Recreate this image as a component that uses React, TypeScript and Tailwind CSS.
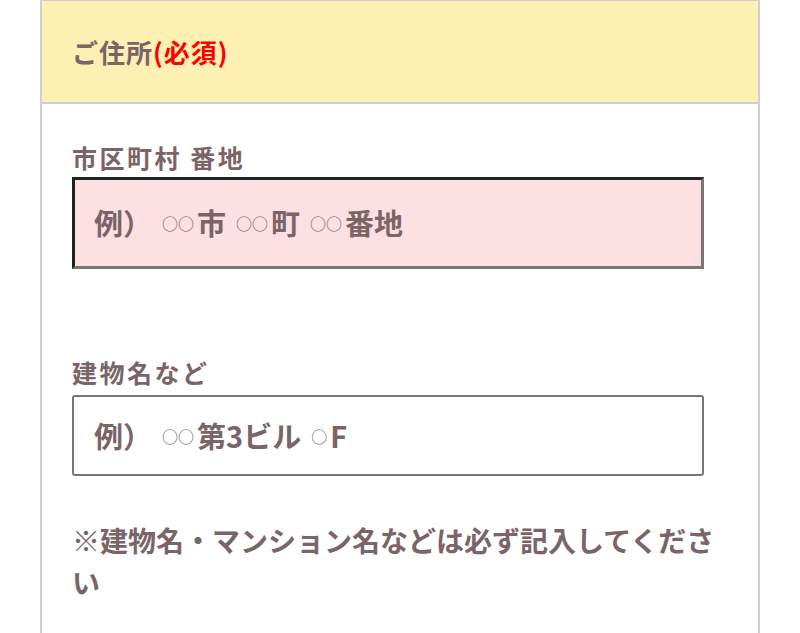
import type { ReactNode } from 'react';

const font = { fontFamily: '"Noto Sans CJK JP", "Noto Sans", sans-serif' };

const Maru = ({ n = 2 }: { n?: number }) => (
  <span className="ml-[10px] mr-[3px] text-[16px] font-normal text-[#6f5a5d]">{'○'.repeat(n)}</span>
);

function Field({
  label,
  children,
  variant,
  className,
}: {
  label: string;
  children: ReactNode;
  variant: 'inset' | 'plain';
  className?: string;
}) {
  return (
    <div className={`flex flex-col ${className ?? ''}`}>
      <div className="text-[25px] font-bold leading-[30px] tracking-[2.5px] text-[#7b6467]">{label}</div>
      {variant === 'inset' ? (
        <div className="mt-[5px] flex h-[92px] w-[632px] items-center border-[3px] border-t-[#222] border-l-[#222] border-b-[#777] border-r-[#777] bg-[#fde0e1] pl-[19px] text-[29px] font-bold whitespace-nowrap text-[#7b6467]">
          {children}
        </div>
      ) : (
        <div className="mt-[8px] flex h-[81px] w-[632px] items-center rounded-[3px] border-2 border-[#767676] bg-white pl-[20px] text-[29px] font-bold whitespace-nowrap text-[#7b6467]">
          {children}
        </div>
      )}
    </div>
  );
}

export default function App() {
  return (
    <div className="h-[633px] w-[800px] overflow-hidden bg-white" style={font}>
      <div className="ml-[40px] h-full w-[720px] border-x-2 border-t border-[#cfcfcf]">
        <div className="flex h-[103px] items-center border-b-2 border-[#cfcfcf] bg-[#feefb2] pl-[30px] text-[26px] font-bold tracking-[1px] text-[#7b6467]">
          ご住所<span className="text-[#ff0000]">(必須)</span>
        </div>
        <div className="flex flex-col px-[30px] pt-[38px]">
          <Field label="市区町村 番地" variant="inset">
            例）<Maru />市<Maru />町<Maru />番地
          </Field>
          <Field label="建物名など" variant="plain" className="mt-[88px]">
            例）<Maru />第3ビル<Maru n={1} />F
          </Field>
          <p className="mt-[43px] text-[28px] font-bold leading-[42px] text-[#7b6467]">
            ※建物名・マンション名などは必ず記入してください
          </p>
        </div>
      </div>
    </div>
  );
}
